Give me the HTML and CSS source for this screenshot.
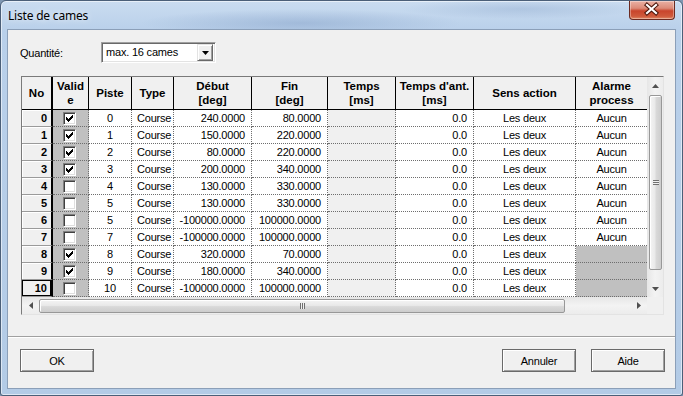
FILE: index.html
```html
<!DOCTYPE html>
<html lang="fr">
<head>
<meta charset="utf-8">
<title>Liste de cames</title>
<link rel="stylesheet" href="styles.css">
</head>
<body>
<div class="window">
  <div class="titlebar">
    <span class="title">Liste de cames</span>
    <div class="close" aria-label="Fermer">
      <svg width="45" height="19" viewBox="0 0 45 19">
        <path d="M18 5 L27 13 M27 5 L18 13" stroke="#4a1409" stroke-width="4.2" stroke-linecap="square" fill="none"/>
        <path d="M18 5 L27 13 M27 5 L18 13" stroke="#ffffff" stroke-width="2.2" stroke-linecap="square" fill="none"/>
      </svg>
    </div>
  </div>
  <div class="client">
    <div class="qty-row">
      <span class="qty-label">Quantité:</span>
      <div class="combo">
        <span class="combo-text">max. 16 cames</span>
        <span class="combo-btn"><svg width="7" height="4" viewBox="0 0 7 4"><path d="M0 0h7L3.5 4z" fill="#000"/></svg></span>
      </div>
    </div>

    <div class="grid">
      <div class="grid-main">
        <div class="viewport">
          <table class="cams">
            <thead>
              <tr>
                <th class="c-no">No</th>
                <th class="c-val">Valid<br>e</th>
                <th class="c-piste">Piste</th>
                <th class="c-type">Type</th>
                <th class="c-deb">Début<br>[deg]</th>
                <th class="c-fin">Fin<br>[deg]</th>
                <th class="c-tps">Temps<br>[ms]</th>
                <th class="c-ant">Temps d'ant.<br>[ms]</th>
                <th class="c-sens">Sens action</th>
                <th class="c-alarm">Alarme<br>process</th>
              </tr>
            </thead>
            <tbody>
              <tr><th class="rh">0</th><td class="val"><span class="chk on"><svg width="7" height="7" viewBox="0 0 7 7"><path d="M6 0h1v1h-1zM5 1h2v1h-2zM0 2h1v1h-1zM4 2h3v1h-3zM0 3h2v1h-2zM3 3h3v1h-3zM0 4h5v1h-5zM1 5h3v1h-3zM2 6h1v1h-1z" fill="#000"/></svg></span></td><td class="ctr">0</td><td class="lft">Course</td><td class="rgt">240.0000</td><td class="rgt">80.0000</td><td class="tps"></td><td class="rgt">0.0</td><td class="ctr">Les deux</td><td class="ctr last">Aucun</td></tr>
              <tr><th class="rh">1</th><td class="val"><span class="chk on"><svg width="7" height="7" viewBox="0 0 7 7"><path d="M6 0h1v1h-1zM5 1h2v1h-2zM0 2h1v1h-1zM4 2h3v1h-3zM0 3h2v1h-2zM3 3h3v1h-3zM0 4h5v1h-5zM1 5h3v1h-3zM2 6h1v1h-1z" fill="#000"/></svg></span></td><td class="ctr">1</td><td class="lft">Course</td><td class="rgt">150.0000</td><td class="rgt">220.0000</td><td class="tps"></td><td class="rgt">0.0</td><td class="ctr">Les deux</td><td class="ctr last">Aucun</td></tr>
              <tr><th class="rh">2</th><td class="val"><span class="chk on"><svg width="7" height="7" viewBox="0 0 7 7"><path d="M6 0h1v1h-1zM5 1h2v1h-2zM0 2h1v1h-1zM4 2h3v1h-3zM0 3h2v1h-2zM3 3h3v1h-3zM0 4h5v1h-5zM1 5h3v1h-3zM2 6h1v1h-1z" fill="#000"/></svg></span></td><td class="ctr">2</td><td class="lft">Course</td><td class="rgt">80.0000</td><td class="rgt">220.0000</td><td class="tps"></td><td class="rgt">0.0</td><td class="ctr">Les deux</td><td class="ctr last">Aucun</td></tr>
              <tr><th class="rh">3</th><td class="val"><span class="chk on"><svg width="7" height="7" viewBox="0 0 7 7"><path d="M6 0h1v1h-1zM5 1h2v1h-2zM0 2h1v1h-1zM4 2h3v1h-3zM0 3h2v1h-2zM3 3h3v1h-3zM0 4h5v1h-5zM1 5h3v1h-3zM2 6h1v1h-1z" fill="#000"/></svg></span></td><td class="ctr">3</td><td class="lft">Course</td><td class="rgt">200.0000</td><td class="rgt">340.0000</td><td class="tps"></td><td class="rgt">0.0</td><td class="ctr">Les deux</td><td class="ctr last">Aucun</td></tr>
              <tr><th class="rh">4</th><td class="val"><span class="chk"></span></td><td class="ctr">4</td><td class="lft">Course</td><td class="rgt">130.0000</td><td class="rgt">330.0000</td><td class="tps"></td><td class="rgt">0.0</td><td class="ctr">Les deux</td><td class="ctr last">Aucun</td></tr>
              <tr><th class="rh">5</th><td class="val"><span class="chk"></span></td><td class="ctr">5</td><td class="lft">Course</td><td class="rgt">130.0000</td><td class="rgt">330.0000</td><td class="tps"></td><td class="rgt">0.0</td><td class="ctr">Les deux</td><td class="ctr last">Aucun</td></tr>
              <tr><th class="rh">6</th><td class="val"><span class="chk"></span></td><td class="ctr">5</td><td class="lft">Course</td><td class="rgt">-100000.0000</td><td class="rgt">100000.0000</td><td class="tps"></td><td class="rgt">0.0</td><td class="ctr">Les deux</td><td class="ctr last">Aucun</td></tr>
              <tr><th class="rh">7</th><td class="val"><span class="chk"></span></td><td class="ctr">7</td><td class="lft">Course</td><td class="rgt">-100000.0000</td><td class="rgt">100000.0000</td><td class="tps"></td><td class="rgt">0.0</td><td class="ctr">Les deux</td><td class="ctr last">Aucun</td></tr>
              <tr><th class="rh">8</th><td class="val"><span class="chk on"><svg width="7" height="7" viewBox="0 0 7 7"><path d="M6 0h1v1h-1zM5 1h2v1h-2zM0 2h1v1h-1zM4 2h3v1h-3zM0 3h2v1h-2zM3 3h3v1h-3zM0 4h5v1h-5zM1 5h3v1h-3zM2 6h1v1h-1z" fill="#000"/></svg></span></td><td class="ctr">8</td><td class="lft">Course</td><td class="rgt">320.0000</td><td class="rgt">70.0000</td><td class="tps"></td><td class="rgt">0.0</td><td class="ctr">Les deux</td><td class="ctr last off"></td></tr>
              <tr><th class="rh">9</th><td class="val"><span class="chk on"><svg width="7" height="7" viewBox="0 0 7 7"><path d="M6 0h1v1h-1zM5 1h2v1h-2zM0 2h1v1h-1zM4 2h3v1h-3zM0 3h2v1h-2zM3 3h3v1h-3zM0 4h5v1h-5zM1 5h3v1h-3zM2 6h1v1h-1z" fill="#000"/></svg></span></td><td class="ctr">9</td><td class="lft">Course</td><td class="rgt">180.0000</td><td class="rgt">340.0000</td><td class="tps"></td><td class="rgt">0.0</td><td class="ctr">Les deux</td><td class="ctr last off"></td></tr>
              <tr><th class="rh cur">10</th><td class="val"><span class="chk"></span></td><td class="ctr">10</td><td class="lft">Course</td><td class="rgt">-100000.0000</td><td class="rgt">100000.0000</td><td class="tps"></td><td class="rgt">0.0</td><td class="ctr">Les deux</td><td class="ctr last off"></td></tr>
            </tbody>
          </table>
        </div>
        <div class="vscroll">
          <div class="sb-btn"><svg width="7" height="4" viewBox="0 0 7 4"><path d="M3.5 0L7 4H0z" fill="#505050"/></svg></div>
          <div class="vtrack">
            <div class="vthumb"><span class="vgrip"></span></div>
          </div>
          <div class="sb-btn"><svg width="7" height="4" viewBox="0 0 7 4"><path d="M0 0h7L3.5 4z" fill="#505050"/></svg></div>
        </div>
      </div>
      <div class="grid-bottom">
        <div class="hscroll">
          <div class="sb-btn h"><svg width="4" height="7" viewBox="0 0 4 7"><path d="M4 0v7L0 3.5z" fill="#505050"/></svg></div>
          <div class="htrack">
            <div class="hthumb"><span class="hgrip"></span></div>
          </div>
          <div class="sb-btn h"><svg width="4" height="7" viewBox="0 0 4 7"><path d="M0 0v7L4 3.5z" fill="#505050"/></svg></div>
        </div>
        <div class="corner"></div>
      </div>
    </div>

    <div class="sep"></div>

    <div class="buttons">
      <button class="btn">OK</button>
      <div class="spacer"></div>
      <button class="btn">Annuler</button>
      <button class="btn">Aide</button>
    </div>
  </div>
</div>
</body>
</html>
```

FILE: styles.css
```css
* { box-sizing: border-box; }

html, body {
  margin: 0;
  padding: 0;
}

body {
  width: 683px;
  height: 396px;
  overflow: hidden;
  background: #7f97b2;
  font-family: "Liberation Sans", Arial, sans-serif;
  font-size: 11px;
  letter-spacing: -0.2px;
  color: #000;
}

.window {
  width: 683px;
  height: 396px;
  border: 1px solid #4b5f78;
  border-radius: 6px 6px 3px 3px;
  background:
    radial-gradient(ellipse 160px 14px at 300px 22px, rgba(110,140,185,0.35), rgba(110,140,185,0) 100%),
    radial-gradient(ellipse 120px 10px at 520px 8px, rgba(110,140,185,0.25), rgba(110,140,185,0) 100%),
    linear-gradient(180deg, #cadcf0 0px, #b9d0ea 30px, #b3cbe6 100%);
  padding: 0 6px 6px 6px;
  display: flex;
  flex-direction: column;
  box-shadow: inset 0 0 0 1px rgba(255,255,255,0.55);
}

/* title bar */
.titlebar {
  height: 28px;
  flex: none;
  display: flex;
  justify-content: space-between;
  align-items: flex-start;
}

.title {
  font-family: "Noto Sans", "Open Sans", sans-serif;
  font-size: 12px;
  letter-spacing: -0.2px;
  line-height: 18px;
  padding: 6px 0 0 1px;
  color: #000;
  text-shadow: 0 0 6px rgba(255,255,255,0.9);
}

.close {
  width: 46px;
  height: 19px;
  margin-right: 1px;
  border: 1px solid #6b2a20;
  border-top: none;
  border-radius: 0 0 4px 4px;
  background: linear-gradient(180deg, #eab1a4 0%, #dc8a78 40%, #c9452c 55%, #cf5a3c 85%, #e08a66 100%);
  box-shadow: inset 0 0 0 1px rgba(255,255,255,0.35);
  display: flex;
  align-items: center;
  justify-content: center;
}
.close svg { display: block; margin-left: -1px; margin-top: -1px; }

/* client area */
.client {
  flex: 1;
  background: #f0f0f0;
  border: 1px solid #8b9fb8;
  display: flex;
  flex-direction: column;
}

.qty-row {
  display: flex;
  align-items: center;
  margin-top: 12px;
  padding-left: 12px;
  height: 21px;
}

.qty-label {
  width: 81px;
}

.combo {
  width: 115px;
  height: 21px;
  background: #fff;
  border: 1px solid;
  border-color: #a0a0a0 #fff #fff #a0a0a0;
  box-shadow: inset 1px 1px 0 #696969, inset -1px -1px 0 #e3e3e3;
  display: flex;
  align-items: center;
  padding: 1px 2px 1px 1px;
}

.combo-text {
  flex: 1;
  padding-left: 3px;
  line-height: 17px;
}

.combo-btn {
  width: 16px;
  height: 17px;
  background: #f0f0f0;
  border: 1px solid;
  border-color: #e3e3e3 #696969 #696969 #e3e3e3;
  box-shadow: inset 1px 1px 0 #fff, inset -1px -1px 0 #a0a0a0;
  display: flex;
  align-items: center;
  justify-content: center;
}
.combo-btn svg { display: block; }

/* grid */
.grid {
  margin: 13px 0 0 13px;
  width: 643px;
  height: 239px;
  border: 1px solid;
  border-color: #7a7a7a #e3e3e3 #e3e3e3 #7a7a7a;
  display: flex;
  flex-direction: column;
  background: #f0f0f0;
}

.grid-main {
  display: flex;
  height: 220px;
}

.viewport {
  width: 625px;
  height: 220px;
  overflow: hidden;
  background: #fff;
}

.cams {
  width: 625px;
  table-layout: fixed;
  border-collapse: separate;
  border-spacing: 0;
}

.cams th, .cams td {
  padding: 0;
  white-space: nowrap;
  overflow: hidden;
}

.cams thead tr { height: 33px; }

.cams thead th {
  height: 33px;
  background: #f0f0f0;
  font-size: 11.5px;
  font-weight: bold;
  letter-spacing: 0;
  line-height: 14px;
  text-align: center;
  vertical-align: middle;
  border-right: 1px solid #000;
  border-bottom: 1px solid #000;
}

.c-no    { width: 31px; }
.c-val   { width: 36px; }
.c-piste { width: 43px; }
.c-type  { width: 42px; }
.c-deb   { width: 78px; }
.c-fin   { width: 76px; }
.c-tps   { width: 68px; }
.c-ant   { width: 78px; }
.c-sens  { width: 102px; }
.c-alarm { width: 71px; }

.cams thead th.c-no { border-right-width: 2px; }
.cams thead th.c-alarm { border-right: none; }

.cams tbody tr { height: 17px; }

.cams tbody td,
.cams tbody th {
  height: 17px;
  line-height: 16px;
}

.cams tbody td {
  border-right: 1px dotted #6e6e6e;
  border-bottom: 1px dotted #6e6e6e;
  vertical-align: middle;
}

.cams tbody th.rh {
  background: #f0f0f0;
  font-weight: bold;
  font-size: 11px;
  letter-spacing: 0;
  text-align: right;
  padding-right: 4px;
  border-right: 2px solid #000;
  border-bottom: 1px solid #9a9a9a;
  box-shadow: inset 1px 1px 0 #fff;
}

.cams tbody th.rh.cur {
  box-shadow: inset 0 0 0 1px #000;
}

.cams td.val {
  background: #c0c0c0;
  padding-left: 10px;
  line-height: 0;
}

.chk {
  display: inline-block;
  vertical-align: middle;
  width: 13px;
  height: 13px;
  background: #fff;
  border: 1px solid;
  border-color: #808080 #fff #fff #808080;
  box-shadow: inset 1px 1px 0 #404040, inset -1px -1px 0 #dfdfdf;
  position: relative;
}
.chk svg {
  position: absolute;
  left: 2px;
  top: 2px;
  display: block;
  shape-rendering: crispEdges;
}

.cams td.ctr { text-align: center; }
.cams td.lft { text-align: left; padding-left: 5px; }
.cams td.rgt { text-align: right; padding-right: 6px; }
.cams td.tps { background: #f0f0f0; }
.cams td.last { border-right: none; }
.cams td.off { background: #c0c0c0; }

/* vertical scrollbar */
.vscroll {
  width: 16px;
  display: flex;
  flex-direction: column;
  background: linear-gradient(90deg, #e6e6e6 0%, #f3f3f3 50%, #ececec 100%);
}

.sb-btn {
  flex: none;
  width: 16px;
  height: 17px;
  display: flex;
  align-items: center;
  justify-content: center;
}
.sb-btn svg { display: block; }
.sb-btn.h { width: 17px; height: 17px; }

.vtrack {
  flex: 1;
  padding: 1px 1px 10px 2px;
  display: flex;
}

.vthumb {
  flex: 1;
  border: 1px solid #989898;
  border-radius: 2px;
  background: linear-gradient(90deg, #f4f4f4 0%, #e9e9e9 45%, #d9d9d9 55%, #cdcdcd 100%);
  box-shadow: inset 1px 1px 0 #fff;
  display: flex;
  align-items: center;
  justify-content: center;
}

.vgrip {
  width: 6px;
  height: 5px;
  background: repeating-linear-gradient(180deg, #707070 0, #707070 1px, #f0f0f0 1px, #f0f0f0 2px);
}

/* bottom row */
.grid-bottom {
  display: flex;
  height: 17px;
}

.hscroll {
  width: 625px;
  display: flex;
  background: linear-gradient(180deg, #e6e6e6 0%, #f3f3f3 50%, #ececec 100%);
}

.htrack {
  flex: 1;
  padding: 2px 65px 1px 0;
  display: flex;
}

.hthumb {
  flex: 1;
  border: 1px solid #989898;
  border-radius: 2px;
  background: linear-gradient(180deg, #f4f4f4 0%, #e9e9e9 45%, #d9d9d9 55%, #cdcdcd 100%);
  box-shadow: inset 1px 1px 0 #fff;
  display: flex;
  align-items: center;
  justify-content: center;
}

.hgrip {
  width: 5px;
  height: 6px;
  background: repeating-linear-gradient(90deg, #707070 0, #707070 1px, #f0f0f0 1px, #f0f0f0 2px);
}

.corner {
  width: 16px;
  background: #f0f0f0;
}

/* separator + buttons */
.sep {
  margin-top: 21px;
  height: 2px;
  border-top: 1px solid #a0a0a0;
  border-bottom: 1px solid #fff;
}

.buttons {
  display: flex;
  margin-top: 11px;
  padding: 0 10px 0 12px;
  gap: 15px;
}

.spacer { flex: 1; }

.btn {
  width: 74px;
  height: 23px;
  padding: 0;
  font-family: "Liberation Sans", Arial, sans-serif;
  font-size: 11px;
  letter-spacing: -0.2px;
  color: #000;
  background: #f0f0f0;
  border: 1px solid #6a6a6a;
  box-shadow: inset 1px 1px 0 #fff, inset -1px -1px 0 #a0a0a0;
  border-radius: 0;
}
```
